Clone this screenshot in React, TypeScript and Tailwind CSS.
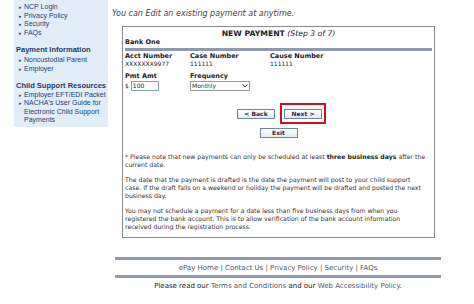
import React from "react";

const side = "font-['Liberation_Sans',Arial,sans-serif]";
const main = "font-['DejaVu_Sans',Verdana,sans-serif]";

function SideLink({ children }: { children: React.ReactNode }) {
  return (
    <li className="flex items-start gap-[2px] text-[7px] leading-[8.6px] text-[#1f3f7a]">
      <span className="text-[5px] leading-[8.6px] text-[#1f3f7a]">▸</span>
      <span>{children}</span>
    </li>
  );
}

function Btn({ children }: { children: React.ReactNode }) {
  return (
    <button className="w-[38px] h-[10px] border border-[#6f86a6] bg-gradient-to-b from-white to-[#e6e9ee] text-[6px] leading-[8px] font-bold text-[#1d2d55]">
      {children}
    </button>
  );
}

export default function App() {
  return (
    <div className="w-[474px] h-[304px] bg-white flex overflow-hidden">
      <aside className={`${side} ml-[14px] w-[94px] h-[127px] bg-[#e1edf9] pl-[2px] pt-[3px]`}>
        <ul className="pl-[3px]">
          <SideLink>NCP Login</SideLink>
          <SideLink>Privacy Policy</SideLink>
          <SideLink>Security</SideLink>
          <SideLink>FAQs</SideLink>
        </ul>
        <h3 className="mt-[8px] text-[7.5px] leading-[10px] font-bold text-[#1f3a6e]">Payment Information</h3>
        <ul className="mt-[1px] pl-[3px]">
          <SideLink>Noncustodial Parent</SideLink>
          <SideLink>Employer</SideLink>
        </ul>
        <h3 className="mt-[7px] text-[7.5px] leading-[10px] font-bold text-[#1f3a6e]">Child Support Resources</h3>
        <ul className="pl-[3px]">
          <SideLink>Employer EFT/EDI Packet</SideLink>
          <SideLink>
            NACHA's User Guide for Electronic Child Support Payments
          </SideLink>
        </ul>
      </aside>

      <main className={`${main} ml-[4px] w-[329px] flex flex-col`}>
        <p className="mt-[10px] text-[8px] leading-[8px] italic text-[#444]">
          You can Edit an existing payment at anytime.
        </p>

        <section className="mt-[8px] ml-[10px] w-[313px] h-[212px] border border-[#8a8a8a] px-[2px] text-[#222]">
          <div className="mt-[3px] text-center text-[7.7px] leading-[8px]">
            <span className="font-bold">NEW PAYMENT</span>{" "}
            <span className="italic">(Step 3 of 7)</span>
          </div>
          <div className="text-[6.5px] leading-[8px] font-bold">Bank One</div>
          <div className="mt-[2px] h-[3px] bg-[#8e9ab2]" />
          <div className="mt-[1px] grid grid-cols-[65px_80px_1fr] text-[6.5px] leading-[8px]">
            <span className="font-bold">Acct Number</span>
            <span className="font-bold">Case Number</span>
            <span className="font-bold">Cause Number</span>
            <span className="text-[6px]">XXXXXXX9977</span>
            <span className="text-[6px]">111111</span>
            <span className="text-[6px]">111111</span>
            <span className="mt-[4px] font-bold">Pmt Amt</span>
            <span className="mt-[4px] font-bold">Frequency</span>
            <span />
            <div className="mt-[1px] flex items-center gap-[2px] text-[6px]">
              <span>$</span>
              <div className="w-[28px] h-[10px] border border-[#7f9fc8] pl-[1px] leading-[8px]">100</div>
            </div>
            <div className="mt-[1px] w-[60px] h-[10px] border border-[#999] flex items-center justify-between px-[1px] text-[6px] text-[#333]">
              <span>Monthly</span>
              <svg width="6" height="4" viewBox="0 0 6 4">
                <path d="M0.5 0.5 L3 3 L5.5 0.5" fill="none" stroke="#333" strokeWidth="1" />
              </svg>
            </div>
            <span />
          </div>

          <div className="mt-[12px] flex justify-center items-center gap-[5px] pl-[6px]">
            <Btn>&lt; Back</Btn>
            <div className="w-[46px] h-[21px] border-2 border-[#d0111b] flex items-center justify-center">
              <Btn>Next &gt;</Btn>
            </div>
          </div>
          <div className="mt-[4px] flex justify-center">
            <Btn>Exit</Btn>
          </div>

          <div className="mt-[15px] whitespace-nowrap text-[6.2px] leading-[8px] text-[#333]">
            <p>
              * Please note that new payments can only be scheduled at least{" "}
              <b className="text-[#222]">three business days</b> after the
              <br />
              current date.
            </p>
            <p className="mt-[7px]">
              The date that the payment is drafted is the date the payment will post to your child support
              <br />
              case. If the draft falls on a weekend or holiday the payment will be drafted and posted the next
              <br />
              business day.
            </p>
            <p className="mt-[7px]">
              You may not schedule a payment for a date less than five business days from when you
              <br />
              registered the bank account. This is to allow verification of the bank account information
              <br />
              received during the registration process.
            </p>
          </div>
        </section>

        <div className="mt-[19px] ml-[3px] w-[326px] h-[3px] bg-[#8e9ab2]" />
        <div className="mt-[4px] ml-[3px] w-[326px] text-center text-[7px] leading-[8px] text-[#4b5873]">
          ePay Home | Contact Us | Privacy Policy | Security | FAQs
        </div>
        <div className="mt-[3px] ml-[3px] w-[326px] h-[3px] bg-[#8e9ab2]" />
        <div className="mt-[4px] ml-[3px] w-[326px] text-center text-[7px] leading-[8px] text-[#222]">
          Please read our <span className="text-[#4b5873]">Terms and Conditions</span> and our{" "}
          <span className="text-[#4b5873]">Web Accessibility Policy</span>.
        </div>
      </main>
    </div>
  );
}
